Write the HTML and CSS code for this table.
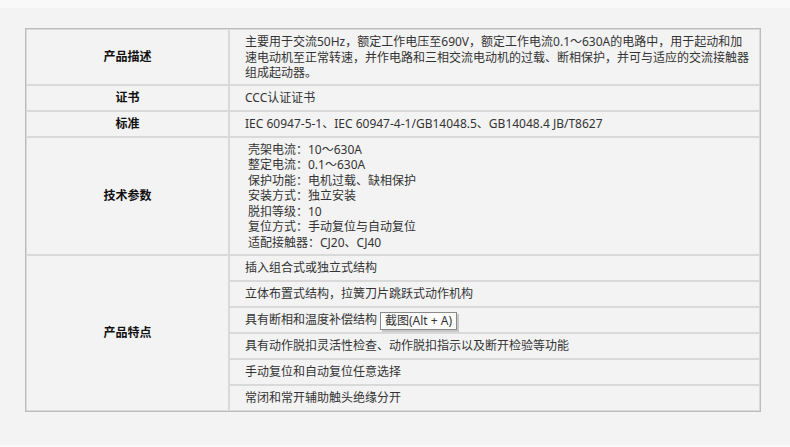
FILE: index.html
```html
<!DOCTYPE html>
<html lang="zh-CN">
<head>
<meta charset="utf-8">
<title>产品参数</title>
<link rel="stylesheet" href="styles.css">
</head>
<body>
<div class="page">
  <table class="spec">
    <tr>
      <th class="label">产品描述</th>
      <td class="desc">主要用于交流50Hz，额定工作电压至690V，额定工作电流0.1～630A的电路中，用于起动和加<br>速电动机至正常转速，并作电路和三相交流电动机的过载、断相保护，并可与适应的交流接触器<br>组成起动器。</td>
    </tr>
    <tr>
      <th class="label">证书</th>
      <td>CCC认证证书</td>
    </tr>
    <tr>
      <th class="label">标准</th>
      <td>IEC 60947-5-1、IEC 60947-4-1/GB14048.5、GB14048.4 JB/T8627</td>
    </tr>
    <tr>
      <th class="label">技术参数</th>
      <td class="params">壳架电流：10～630A<br>整定电流：0.1～630A<br>保护功能：电机过载、缺相保护<br>安装方式：独立安装<br>脱扣等级：10<br>复位方式：手动复位与自动复位<br>适配接触器：CJ20、CJ40</td>
    </tr>
    <tr>
      <th class="label" rowspan="6">产品特点</th>
      <td>插入组合式或独立式结构</td>
    </tr>
    <tr><td>立体布置式结构，拉簧刀片跳跃式动作机构</td></tr>
    <tr><td class="has-tip">具有断相和温度补偿结构<span class="tip">截图(Alt + A)</span></td></tr>
    <tr><td>具有动作脱扣灵活性检查、动作脱扣指示以及断开检验等功能</td></tr>
    <tr><td>手动复位和自动复位任意选择</td></tr>
    <tr><td>常闭和常开辅助触头绝缘分开</td></tr>
  </table>
</div>
</body>
</html>
```
FILE: styles.css
```css
html, body {
  margin: 0;
  padding: 0;
  background: #f9f9f9;
}
.page {
  margin-top: 8px;
  height: 437px;
  background: #f3f3f3;
  padding: 20px 0 0 25px;
  box-sizing: border-box;
  font-family: "Noto Sans", "Noto Sans CJK SC", sans-serif;
  font-size: 12px;
  color: #333;
}
.spec {
  border-collapse: separate;
  border-spacing: 0;
  border: 1px solid #bcbcbc;
  width: 736px;
  table-layout: fixed;
}
.spec th, .spec td {
  border: 1px solid #d9d9d9;
  line-height: 15.5px;
  padding: 4px 8px 4.5px 15px;
  text-align: left;
  vertical-align: middle;
}
.spec th.label {
  width: 203px;
  padding: 0;
  text-align: center;
  font-weight: bold;
  color: #111;
  box-sizing: border-box;
}
.spec td.desc {
  white-space: nowrap;
  padding-top: 4px;
  padding-bottom: 3.5px;
}
.spec td.params {
  padding-left: 18px;
  padding-top: 3.5px;
  padding-bottom: 4px;
}
.has-tip {
  position: relative;
}
.tip {
  position: absolute;
  left: 150px;
  top: 4px;
  height: 16px;
  line-height: 16px;
  padding: 0 4px;
  background: #fdfdfd;
  border: 1px solid #8a8a8a;
  box-shadow: 2px 2px 0 #c8c8c8;
  color: #333;
  white-space: nowrap;
}
```
